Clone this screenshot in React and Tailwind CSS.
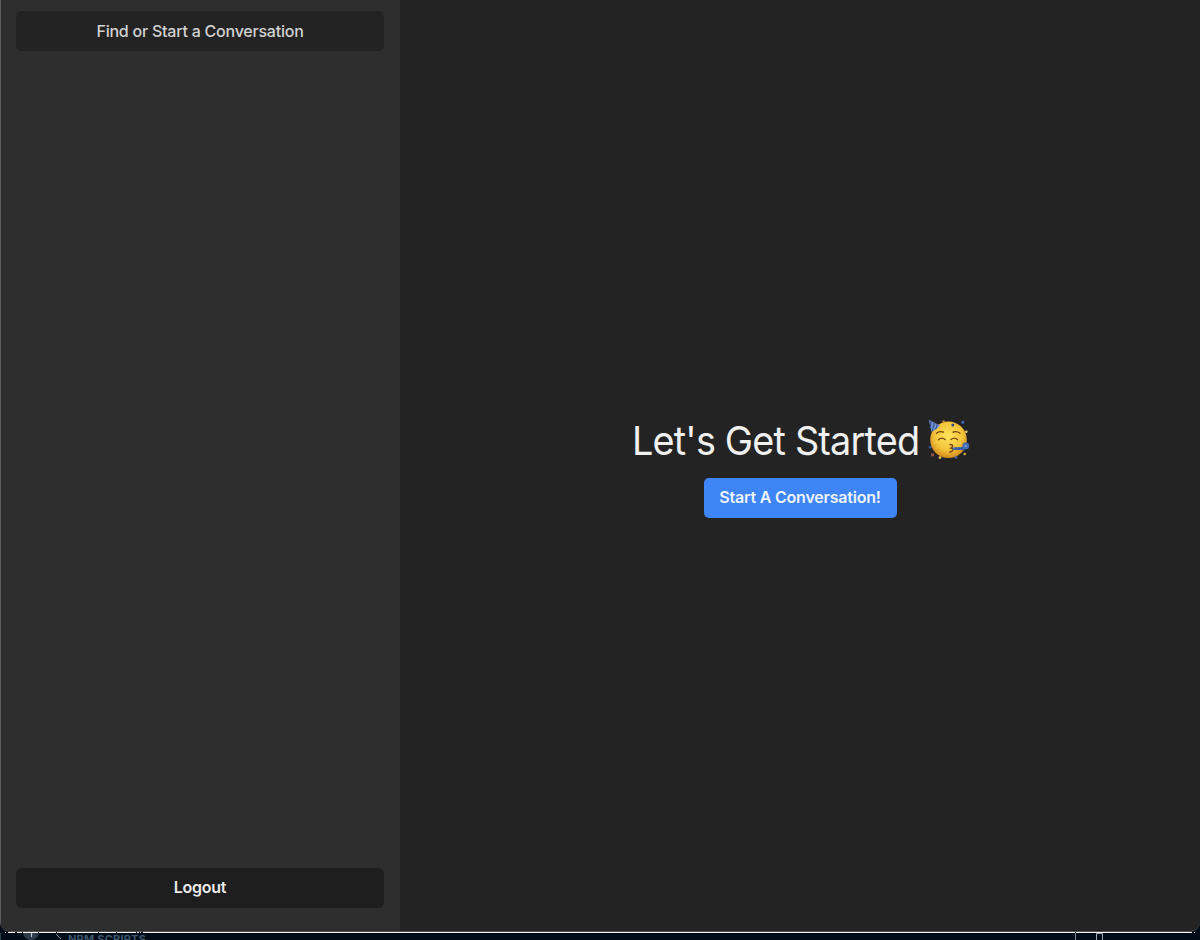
function PartyFace() {
  return (
    <svg viewBox="0 0 42 42" className="h-[42px] w-[42px] shrink-0" aria-hidden="true">
      <defs>
        <radialGradient id="face" cx="0.5" cy="0.4" r="0.62">
          <stop offset="0" stopColor="#ffe45c" />
          <stop offset="0.6" stopColor="#f3c53b" />
          <stop offset="1" stopColor="#d08419" />
        </radialGradient>
      </defs>
      <circle cx="20.5" cy="20.8" r="18.3" fill="url(#face)" />
      <path d="M0.8 0.8 L12 6.5 Q9 10.5 3.4 12.8 Z" fill="#6f92d2" />
      <path d="M3 2 L2.3 8 M6.3 3.7 L4.5 12 M9.4 5.4 L7.6 10.4" stroke="#30498c" strokeWidth="1.1" />
      <g fill="none" stroke="#71420f" strokeWidth="1.3" strokeLinecap="round">
        <path d="M8.5 14.3 Q11.5 11.7 15.5 13.2" />
        <path d="M25 13.2 Q28.5 11.6 32 14.2" />
        <path d="M10.5 20.8 Q13.7 17.7 17 20.5" />
        <path d="M23 20.5 Q26.5 17.7 29.5 20.8" />
        <path d="M22 25.5 Q25.8 25.7 24.3 28 L22.8 29 Q26 29.5 24.6 31.6 Q23.8 33 21.8 33" />
      </g>
      <path d="M24 28.5 L35.5 28 L36.5 31.2 L25 30.8 Z" fill="#4269b4" />
      <path d="M28 28.3 V31 M31 28.3 V31 M34 28 V31" stroke="#263f83" strokeWidth="0.9" />
      <circle cx="37.8" cy="27" r="3.4" fill="#4269b4" />
      <circle cx="37.8" cy="27" r="1.3" fill="#7798d5" />
      <path d="M33 2.5 L36 1.6 L36.4 4.4 L33.8 4.7 Z" fill="#3e68bd" />
      <circle cx="24.8" cy="5.9" r="1.5" fill="#344d91" />
      <circle cx="15.5" cy="2.5" r="1.3" fill="#c48b37" />
      <circle cx="38.3" cy="12.7" r="1.3" fill="#ead070" />
      <circle cx="2.2" cy="28.2" r="1.3" fill="#3f60a8" />
      <path d="M3.2 34.6 L5.8 37 M5.7 34.6 L3.4 37.2" stroke="#a35348" strokeWidth="1.4" />
      <circle cx="12" cy="38.6" r="1.4" fill="#e8c251" />
      <circle cx="28" cy="38.2" r="1.3" fill="#526baa" />
      <circle cx="36.7" cy="35" r="1.3" fill="#dca944" />
    </svg>
  );
}

function Sidebar() {
  return (
    <aside className="flex w-[400px] shrink-0 flex-col justify-between border-l border-[#5c5c5c] bg-[#2e2e2e] pr-4 pb-[23px] pl-[15px] pt-[11px]">
      <button className="h-10 rounded-md bg-[#232323] text-[16px] font-medium tracking-[-0.23px] text-[#d2d2d2]">
        Find or Start a Conversation
      </button>
      <button className="h-10 rounded-md bg-[#1e1e1e] pb-0.5 text-[16px] font-semibold tracking-[-0.25px] text-[#ebebeb]">
        Logout
      </button>
    </aside>
  );
}

function EditorStrip() {
  return (
    <div className="flex h-[7px] overflow-hidden bg-[#010c19]">
      <svg viewBox="0 0 66 7" className="h-[7px] w-[66px] shrink-0" aria-hidden="true">
        <path d="M0.5 0 V7" stroke="#29424c" />
        <circle cx="31" cy="-1" r="8" fill="#2d3c4b" />
        <path d="M31.5 0 V4" stroke="#b8c2c9" strokeWidth="1.2" />
        <path d="M56 1 L61 6" stroke="#7b8b98" fill="none" />
      </svg>
      <span className="ml-[2px] h-4 shrink-0 whitespace-nowrap text-[11px] font-bold leading-[12px] tracking-[0.22px] text-[#3d566a]">
        NPM SCRIPTS
      </span>
      <svg viewBox="0 0 30 7" className="mr-[96px] ml-auto h-[7px] w-[30px] shrink-0" aria-hidden="true">
        <path d="M1.5 0 V7" stroke="#7b8d9b" />
        <path d="M22.5 7 V0.5 H28.5 V7" fill="none" stroke="#9dabb5" />
      </svg>
    </div>
  );
}

export default function App() {
  return (
    <div className="flex h-[940px] w-[1200px] flex-col overflow-hidden bg-[#010c19] font-['Inter','Liberation_Sans',sans-serif]">
      <div className="flex h-[932px] shrink-0 overflow-hidden rounded-b-[10px] border-b border-[#505050] bg-[#232323]">
        <Sidebar />
        <main className="flex flex-1 flex-col items-center pt-[418px]">
          <h1 className="flex h-[44px] items-center gap-[6px] whitespace-nowrap pl-[2px] text-[40px] leading-[44px] tracking-[-0.85px] text-[#f0f0f0]">
            <span className="w-[290px] origin-left scale-x-[0.945] pt-[2px]">Let's Get Started</span>
            <PartyFace />
          </h1>
          <button className="mt-4 h-10 w-[193px] rounded-[5px] bg-[#3e85f8] pb-0.5 text-[16px] font-semibold tracking-[-0.2px] text-[#edf3fb]">
            Start A Conversation!
          </button>
        </main>
      </div>
      <svg viewBox="0 0 1200 1" className="h-px w-[1200px] shrink-0" aria-hidden="true">
        <path
          d="M5 .5H6 M8 .5H15 M17 .5H22 M23 .5H38 M39 .5H56 M57 .5H98 M99 .5H116 M117 .5H136 M137 .5H139 M140 .5H141 M143 .5H1075 M1076 .5H1192 M1194 .5H1195"
          stroke="#f2f2f2"
        />
      </svg>
      <EditorStrip />
    </div>
  );
}
